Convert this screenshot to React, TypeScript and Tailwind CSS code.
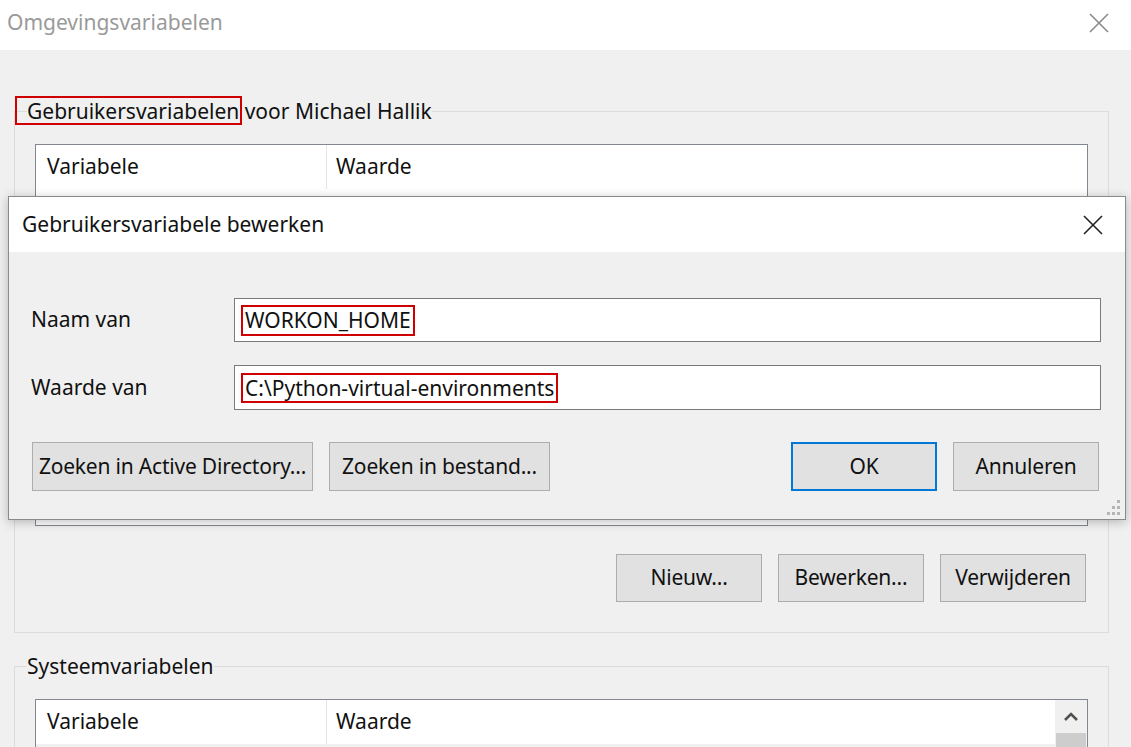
import React from "react";

const font = "font-['Noto_Sans','Open_Sans',sans-serif]";

function WinButton({
  label,
  width,
  primary,
}: {
  label: string;
  width: string;
  primary?: boolean;
}) {
  return (
    <button
      type="button"
      className={`${width} flex h-full items-center justify-center whitespace-nowrap bg-[#e1e1e1] text-[21px] tracking-[-0.2px] text-[#111] ${
        primary ? "border-2 border-[#0078d7]" : "border border-[#adadad]"
      }`}
    >
      {label}
    </button>
  );
}

function ListHeader() {
  return (
    <div className="flex h-[44px] items-center bg-white text-[21px] text-[#111]">
      <div className="flex h-full w-[291px] items-center border-r border-[#e5e5e5] pl-[11px]">
        Variabele
      </div>
      <div className="flex h-full flex-1 items-center pl-[9px]">Waarde</div>
    </div>
  );
}

function CloseIcon({ color }: { color: string }) {
  return (
    <svg width="20" height="20" viewBox="0 0 20 20">
      <path d="M1 1 L19 19 M19 1 L1 19" stroke={color} strokeWidth="1.6" fill="none" />
    </svg>
  );
}

function EditDialog() {
  return (
    <div className="absolute left-[8px] top-[196px] flex h-[324px] w-[1118px] flex-col border border-[#8a8a8a] bg-[#f0f0f0] shadow-[0_2px_10px_rgba(0,0,0,0.25)]">
      <div className="flex h-[55px] items-center justify-between bg-white pl-[13px] pr-[22px]">
        <span className="text-[21px] text-[#111]">Gebruikersvariabele bewerken</span>
        <CloseIcon color="#222" />
      </div>
      <div className="relative flex flex-1 flex-col pl-[22px] pr-[24px] pt-[46px]">
        <div className="flex h-[44px] items-center">
          <span className="w-[203px] text-[21px] text-[#111]">Naam van</span>
          <div className="flex h-full flex-1 items-center border border-[#7a7a7a] bg-white pl-[6px]">
            <span className="border-2 border-[#d00000] px-[2px] text-[21px] leading-[27px] text-[#111]">
              WORKON_HOME
            </span>
          </div>
        </div>
        <div className="mt-[23px] flex h-[45px] items-center">
          <span className="w-[203px] text-[21px] text-[#111]">Waarde van</span>
          <div className="flex h-full flex-1 items-center border border-[#7a7a7a] bg-white pl-[6px]">
            <span className="border-2 border-[#d00000] px-[2px] text-[21px] leading-[26px] text-[#111]">
              C:\Python-virtual-environments
            </span>
          </div>
        </div>
        <div className="mt-[32px] flex h-[49px] pl-[1px] pr-[2px]">
          <WinButton label="Zoeken in Active Directory..." width="w-[281px]" />
          <div className="w-[16px]" />
          <WinButton label="Zoeken in bestand..." width="w-[221px]" />
          <div className="flex-1" />
          <WinButton label="OK" width="w-[146px]" primary />
          <div className="w-[16px]" />
          <WinButton label="Annuleren" width="w-[146px]" />
        </div>
        <svg
          className="absolute bottom-[3px] right-[4px]"
          width="16"
          height="16"
          viewBox="0 0 16 16"
        >
          <rect x="12" y="0" width="3" height="3" fill="#b5b5b5" />
          <rect x="7" y="6" width="3" height="3" fill="#b5b5b5" />
          <rect x="12" y="6" width="3" height="3" fill="#b5b5b5" />
          <rect x="2" y="12" width="3" height="3" fill="#b5b5b5" />
          <rect x="7" y="12" width="3" height="3" fill="#b5b5b5" />
          <rect x="12" y="12" width="3" height="3" fill="#b5b5b5" />
        </svg>
      </div>
    </div>
  );
}

export default function App() {
  return (
    <div className={`relative h-[747px] w-[1131px] overflow-hidden bg-[#f0f0f0] ${font}`}>
      <div className="flex h-[50px] items-center justify-between bg-white pb-[4px] pl-[7px] pr-[22px]">
        <span className="text-[21px] text-[#9a9a9a]">Omgevingsvariabelen</span>
        <CloseIcon color="#8a8a8a" />
      </div>

      <fieldset className="mx-[14px] mt-[47px] w-[1094px] border border-[#dcdcdc] px-0 pb-[30px] pt-[19px]">
        <legend className="ml-[12px] text-[21px] leading-[28px] text-[#111]">
          <span className="relative">
            Gebruikersvariabelen
            <span className="absolute -left-[12px] -right-[3px] -top-[1px] bottom-0 border-2 border-[#d00000]" />
          </span>{" "}
          voor Michael Hallik
        </legend>
        <div className="px-[20px]">
          <div className="h-[382px] w-[1053px] border border-[#828790] bg-white">
            <ListHeader />
          </div>
          <div className="mt-[28px] flex h-[48px] justify-end gap-[16px] pr-[2px]">
            <WinButton label="Nieuw..." width="w-[146px]" />
            <WinButton label="Bewerken..." width="w-[146px]" />
            <WinButton label="Verwijderen" width="w-[146px]" />
          </div>
        </div>
      </fieldset>

      <fieldset className="mx-[14px] mt-[19px] w-[1094px] border border-[#dcdcdc] px-0 pb-[30px] pt-[19px]">
        <legend className="ml-[12px] text-[21px] leading-[28px] text-[#111]">
          Systeemvariabelen
        </legend>
        <div className="px-[20px]">
          <div className="flex h-[200px] w-[1053px] border border-[#828790] bg-white">
            <div className="flex-1">
              <ListHeader />
              <div className="h-[40px] bg-[#f0f0f0]" />
            </div>
            <div className="flex w-[32px] flex-col bg-[#f0f0f0]">
              <div className="flex h-[33px] items-center justify-center">
                <svg width="16" height="10" viewBox="0 0 16 10">
                  <path d="M2 8 L8 2 L14 8" stroke="#505050" strokeWidth="2.5" fill="none" />
                </svg>
              </div>
              <div className="mx-[1px] h-[120px] bg-[#cdcdcd]" />
            </div>
          </div>
        </div>
      </fieldset>

      <EditDialog />
    </div>
  );
}
